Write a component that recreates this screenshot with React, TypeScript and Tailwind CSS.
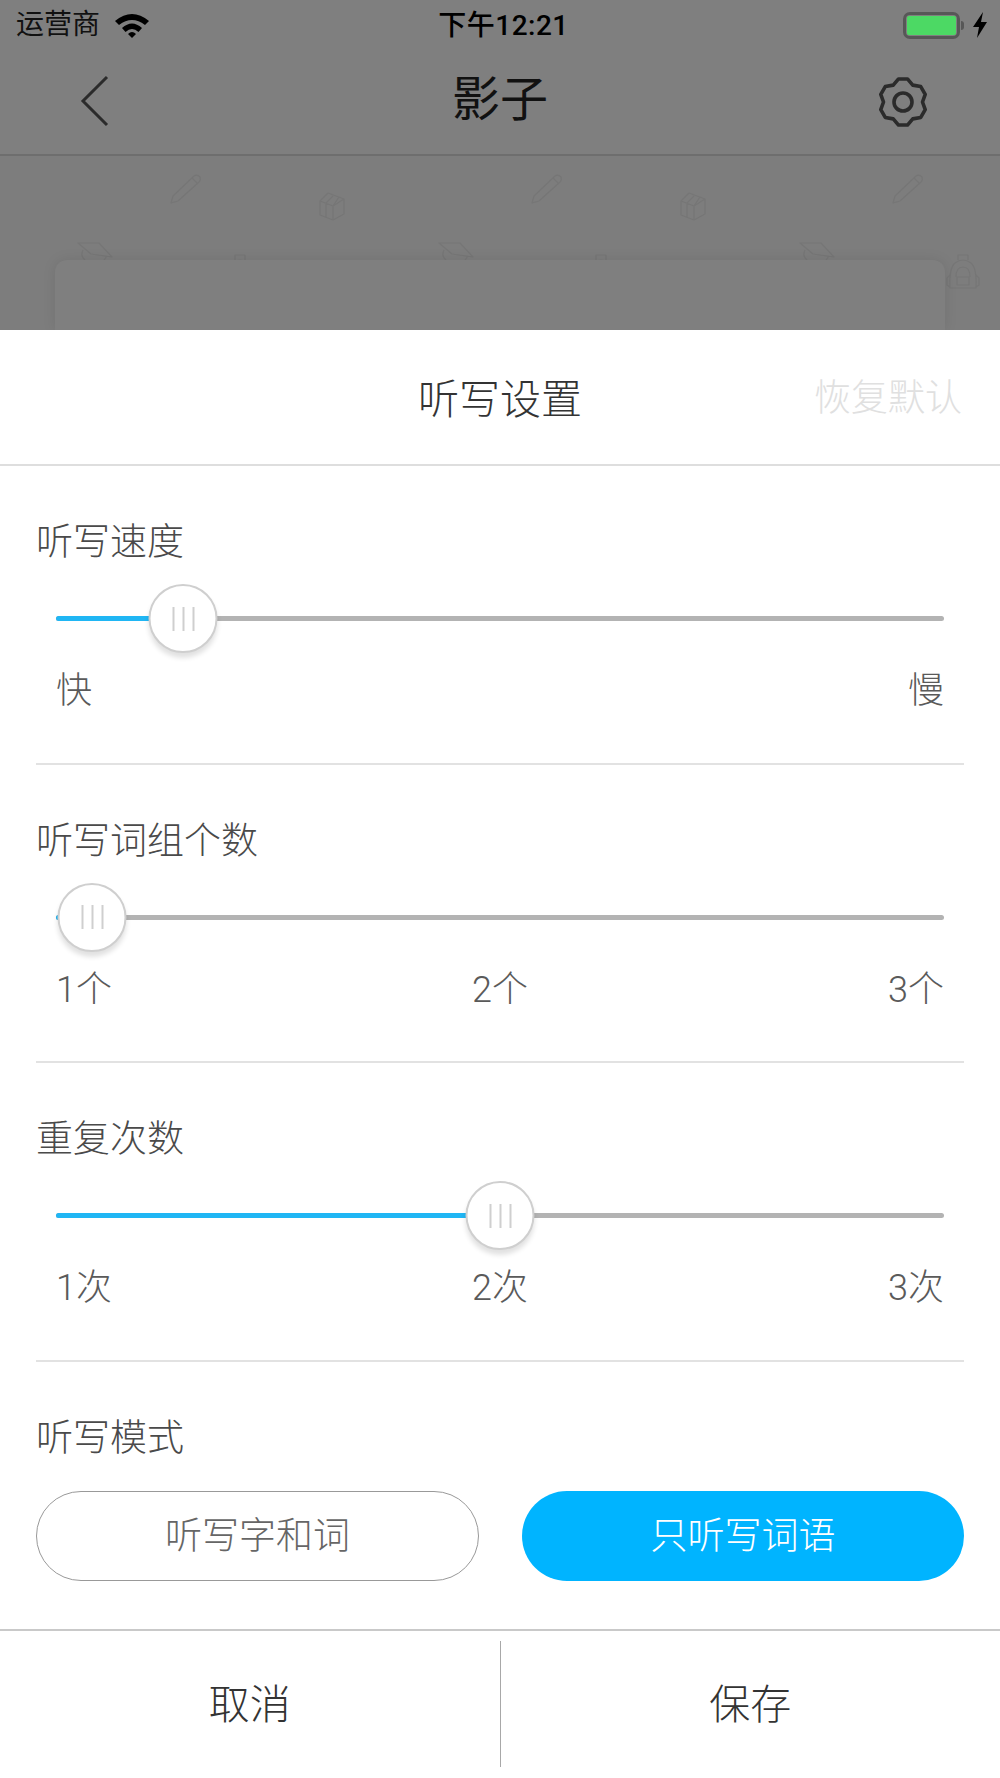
import type { ReactNode } from 'react';

const FONT = "font-['Roboto','Noto_Sans_CJK_SC',sans-serif]";

function Doodle({ x, y, children }: { x: number; y: number; children: ReactNode }) {
  return (
    <g transform={`translate(${x} ${y})`} fill="none" stroke="#767676" strokeWidth="1.2" strokeLinejoin="round">
      {children}
    </g>
  );
}

function Wallpaper() {
  return (
    <svg className="absolute left-0 top-[155px]" width="1000" height="175" viewBox="0 155 1000 175">
      {[170, 531, 892].map((x) => (
        <Doodle key={x} x={x} y={174}>
          <path d="M1 29 L3 22 L24 2 Q27 0 30 3 Q31 6 29 8 L8 27 Z M22 4 L28 10" />
        </Doodle>
      ))}
      {[319, 680].map((x) => (
        <Doodle key={x} x={x} y={192}>
          <path d="M1 9 L9 1 L25 7 L25 22 L14 28 L1 23 Z M1 9 L14 14 L14 28 M7 11 L7 25 M14 14 L25 7 M7 11 L14 4 M14 14 L20 5" />
        </Doodle>
      ))}
      {[77, 438, 799].map((x) => (
        <Doodle key={x} x={x} y={242}>
          <path d="M1 1 L22 1 L35 15 L14 12 Z M6 8 Q3 14 8 18 M30 14 L27 18" />
        </Doodle>
      ))}
      {[223, 584, 946].map((x) => (
        <Doodle key={x} x={x} y={254}>
          <path d="M4 34 Q3 14 9 9 Q17 3 25 9 Q31 14 30 34 Z M12 6 L12 1 L22 1 L22 6 M10 23 Q10 13 17 13 Q24 13 24 23 M11 23 L23 23 L23 31 L11 31 Z M4 21 L1 24 L1 31 L4 33 M30 21 L33 24 L33 31 L30 33" />
        </Doodle>
      ))}
    </svg>
  );
}

function StatusBar() {
  return (
    <div className="relative flex h-[50px] items-center justify-between pl-4 pr-3 text-black">
      <div className="flex items-center gap-[15px]">
        <span className="text-[28px] leading-none text-[#111]">运营商</span>
        <svg width="34" height="25" viewBox="0 0 34 25" fill="#000">
          <path d="M0 8 Q17 -6 34 8 L30 12 Q17 2 4 12 Z" />
          <path d="M7 15 Q17 6 27 15 L23.500 19 Q17 13 10.500 19 Z" />
          <path d="M13 21 Q17 17 21 21 L17 25 Z" />
        </svg>
      </div>
      <div className="absolute left-[7px] right-0 top-[11px] text-center text-[28px] leading-[30px] font-medium tracking-[0.5px]">
        下午12:21
      </div>
      <div className="flex items-center">
        <div className="h-[27px] w-[57px] rounded-[7px] border-[3px] border-[#575757] p-[1px]">
          <div className="h-full w-full rounded-[2px] bg-[#4cd964]" />
        </div>
        <div className="ml-[1px] h-[9px] w-[3px] rounded-r-full bg-[#575757]" />
        <svg className="ml-[8px]" width="16" height="26" viewBox="0 0 16 26" fill="#000">
          <path d="M11 0 L1 15 L7 15 L5 26 L15 10 L9 10 Z" />
        </svg>
      </div>
    </div>
  );
}

// six rounded teeth, one pointing straight up
function gearPath() {
  const at = (deg: number, r: number) => {
    const a = (deg * Math.PI) / 180;
    return `${(28 + r * Math.cos(a)).toFixed(2)} ${(28 - r * Math.sin(a)).toFixed(2)}`;
  };
  const parts: string[] = [];
  for (let t = 30; t < 390; t += 60) {
    parts.push(at(t - 11, 23.5), at(t + 11, 23.5), at(t + 30, 19.5));
  }
  return `M${parts.join(' L')} Z`;
}

function NavBar() {
  return (
    <div className="relative flex h-[106px] items-center justify-between border-b-2 border-[#6e6e6e] pb-[3px] pl-[79px] pr-[69px]">
      <svg width="30" height="52" viewBox="0 0 30 52" fill="none" stroke="#2b2b2b" strokeWidth="3">
        <path d="M28 2 L4 26 L28 50" />
      </svg>
      <div className="absolute left-0 right-0 top-[19px] text-center text-[48px] leading-[62px] text-[#111]">影子</div>
      <svg className="mt-[3px]" width="56" height="56" viewBox="0 0 56 56" fill="none" stroke="#2b2b2b" strokeWidth="3.6" strokeLinejoin="round">
        <path d={gearPath()} />
        <circle cx="28" cy="28" r="9" />
      </svg>
    </div>
  );
}

type SliderProps = {
  title: string;
  thumb: number;
  labels: string[];
};

function Slider({ title, thumb, labels }: SliderProps) {
  return (
    <section className="mx-9 h-[299px] border-b-2 border-[#e2e2e2] pt-[52px]">
      <h2 className="text-[37px] leading-[50px] font-light text-[#4a4a4a]">{title}</h2>
      <div className="relative mx-5 mt-[48px] h-[5px] rounded-full bg-[#b3b3b3]">
        <div className="absolute left-0 top-0 h-[5px] rounded-l-full bg-[#20b6f4]" style={{ width: thumb }} />
        <div
          className="absolute top-[-32px] flex h-[69px] w-[69px] -translate-x-1/2 items-center justify-center gap-[8px] rounded-full border-[2px] border-[#cfcfcf] bg-white shadow-[0_5px_5px_rgba(0,0,0,0.12)]"
          style={{ left: thumb }}
        >
          <span className="h-[24px] w-[2px] bg-[#cfcfcf]" />
          <span className="h-[24px] w-[2px] bg-[#cfcfcf]" />
          <span className="h-[24px] w-[2px] bg-[#cfcfcf]" />
        </div>
      </div>
      <div className="mx-[20px] mt-[47px] flex justify-between text-[36px] leading-[46px] font-light text-[#5a5a5a]">
        {labels.map((label) => (
          <span key={label}>{label}</span>
        ))}
      </div>
    </section>
  );
}

export default function App() {
  return (
    <div className={`flex h-[1778px] w-[1000px] flex-col overflow-hidden bg-white ${FONT}`}>
      <div className="relative h-[330px] shrink-0 overflow-hidden bg-[#7d7d7d]">
        <Wallpaper />
        <div className="absolute bottom-0 left-[55px] right-[55px] top-[260px] rounded-t-[12px] bg-[#7f7f7f] shadow-[0_0_14px_rgba(0,0,0,0.09)]" />
        <div className="absolute inset-x-0 top-0 h-[155px] bg-[#7f7f7f]" />
        <StatusBar />
        <NavBar />
      </div>

      <div className="relative flex h-[136px] shrink-0 items-center justify-center border-b-2 border-[#dedede] pt-[6px]">
        <h1 className="text-[41px] leading-none font-light text-[#333]">听写设置</h1>
        <button className="absolute right-[38px] top-[44px] text-[37px] leading-[50px] font-light text-[#e0e0e0]">恢复默认</button>
      </div>

      <Slider title="听写速度" thumb={127} labels={['快', '慢']} />
      <Slider title="听写词组个数" thumb={36} labels={['1个', '2个', '3个']} />
      <Slider title="重复次数" thumb={444} labels={['1次', '2次', '3次']} />

      <section className="mx-9 h-[267px] pt-[52px]">
        <h2 className="text-[37px] leading-[50px] font-light text-[#4a4a4a]">听写模式</h2>
        <div className="mt-[27px] flex justify-between">
          <button className="h-[90px] w-[443px] rounded-full border border-[#999] pt-[2px] text-[37px] font-light text-[#666]">
            听写字和词
          </button>
          <button className="h-[90px] w-[442px] rounded-full bg-[#00b4ff] pt-[2px] text-[37px] font-light text-white">只听写词语</button>
        </div>
      </section>

      <footer className="flex h-[149px] shrink-0 border-t-2 border-[#c9c9c9] pt-[10px] pb-[11px]">
        <button className="flex-1 pt-[3px] text-[41px] font-light text-[#333]">取消</button>
        <div className="w-[1px] bg-[#a8a8a8]" />
        <button className="flex-1 pt-[3px] text-[41px] font-light text-[#333]">保存</button>
      </footer>
    </div>
  );
}
